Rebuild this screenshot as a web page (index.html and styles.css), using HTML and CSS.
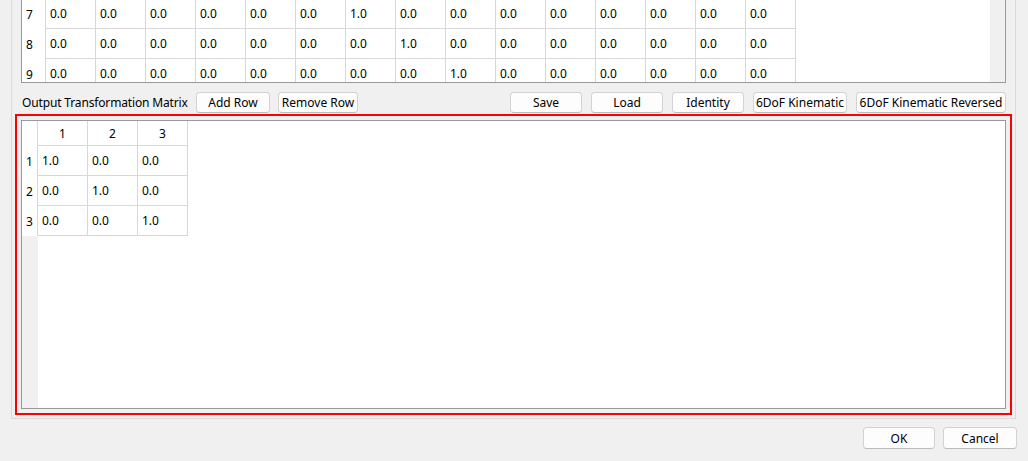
FILE: index.html
```html
<!DOCTYPE html>
<html lang="en">
<head>
    <meta charset="UTF-8">
    <meta name="viewport" content="width=device-width, initial-scale=1.0">
    <title>Transformation Matrix</title>
    <link rel="stylesheet" href="styles.css">
</head>
<body>
    <div class="dialog">
        <div class="group">
            <!-- input matrix, scrolled down to the last rows -->
            <div class="matrix-view">
                <div class="viewport">
                    <div class="grid input-grid">
                        <div class="row-head">7</div>
                        <div class="cell">0.0</div><div class="cell">0.0</div><div class="cell">0.0</div><div class="cell">0.0</div><div class="cell">0.0</div>
                        <div class="cell">0.0</div><div class="cell">1.0</div><div class="cell">0.0</div><div class="cell">0.0</div><div class="cell">0.0</div>
                        <div class="cell">0.0</div><div class="cell">0.0</div><div class="cell">0.0</div><div class="cell">0.0</div><div class="cell">0.0</div>

                        <div class="row-head">8</div>
                        <div class="cell">0.0</div><div class="cell">0.0</div><div class="cell">0.0</div><div class="cell">0.0</div><div class="cell">0.0</div>
                        <div class="cell">0.0</div><div class="cell">0.0</div><div class="cell">1.0</div><div class="cell">0.0</div><div class="cell">0.0</div>
                        <div class="cell">0.0</div><div class="cell">0.0</div><div class="cell">0.0</div><div class="cell">0.0</div><div class="cell">0.0</div>

                        <div class="row-head">9</div>
                        <div class="cell">0.0</div><div class="cell">0.0</div><div class="cell">0.0</div><div class="cell">0.0</div><div class="cell">0.0</div>
                        <div class="cell">0.0</div><div class="cell">0.0</div><div class="cell">0.0</div><div class="cell">1.0</div><div class="cell">0.0</div>
                        <div class="cell">0.0</div><div class="cell">0.0</div><div class="cell">0.0</div><div class="cell">0.0</div><div class="cell">0.0</div>
                    </div>
                </div>
                <div class="scroll-track"></div>
            </div>

            <div class="toolbar">
                <span class="toolbar-label">Output Transformation Matrix</span>
                <button class="btn btn-add">Add Row</button>
                <button class="btn btn-remove">Remove Row</button>
                <span class="spacer"></span>
                <button class="btn">Save</button>
                <button class="btn">Load</button>
                <button class="btn">Identity</button>
                <button class="btn btn-kin">6DoF Kinematic</button>
                <button class="btn btn-kin-rev">6DoF Kinematic Reversed</button>
            </div>

            <div class="highlight">
                <div class="output-view">
                    <div class="grid output-grid">
                        <div class="corner"></div>
                        <div class="col-head">1</div>
                        <div class="col-head">2</div>
                        <div class="col-head">3</div>

                        <div class="row-head">1</div>
                        <div class="cell">1.0</div><div class="cell">0.0</div><div class="cell">0.0</div>
                        <div class="row-head">2</div>
                        <div class="cell">0.0</div><div class="cell">1.0</div><div class="cell">0.0</div>
                        <div class="row-head">3</div>
                        <div class="cell">0.0</div><div class="cell">0.0</div><div class="cell">1.0</div>
                    </div>
                </div>
            </div>
        </div>

        <div class="dialog-buttons">
            <button class="btn">OK</button>
            <button class="btn btn-cancel">Cancel</button>
        </div>
    </div>
</body>
</html>
```

FILE: styles.css
```css
* {
    box-sizing: border-box;
}

body {
    margin: 0;
    height: 461px;
    overflow: hidden;
    background-color: #f0f0f0;
    font-family: 'Noto Sans', 'Segoe UI', sans-serif;
    font-size: 12px;
    color: #000;
}

.dialog {
    padding: 0 11px;
}

.group {
    border: 1px solid #dadada;
    border-top: none;
    margin-right: 1px;
    padding: 0 9px 3px 9px;
}

/* tables */

.grid {
    display: grid;
}

.cell,
.row-head,
.col-head {
    display: flex;
    align-items: center;
    white-space: nowrap;
    background-color: #fff;
}

.cell {
    padding-left: 4px;
    border-right: 1px solid #d8d8d8;
    border-bottom: 1px solid #d8d8d8;
}

.row-head {
    padding-left: 4px;
    border-right: 1px solid #d8d8d8;
}

.col-head {
    justify-content: center;
    border-right: 1px solid #d8d8d8;
    border-bottom: 1px solid #d8d8d8;
}

.corner {
    background-color: #fff;
    border-right: 1px solid #d8d8d8;
}

.matrix-view {
    display: flex;
    height: 83px;
    border: 1px solid #999;
    border-top: none;
    background-color: #fff;
}

.matrix-view .viewport {
    flex: 1;
    overflow: hidden;
}

.matrix-view .scroll-track {
    width: 15px;
    background-color: #f0f0f0;
}

.input-grid {
    grid-template-columns: 24px repeat(15, 50px);
    grid-auto-rows: 30px;
    margin-top: -1px;
}

.highlight {
    margin: 0 -6px;
    border: 2px solid #ff0000;
    padding: 4px;
}

.output-view {
    height: 289px;
    border: 1px solid #999;
    background: linear-gradient(to right, #f0f0f0 16px, #fff 16px);
}

.output-grid {
    grid-template-columns: 16px repeat(3, 50px);
    grid-template-rows: 25px repeat(3, 30px);
}

/* buttons */

.btn {
    height: 21px;
    width: 72px;
    padding: 0;
    border: 1px solid #d3d3d3;
    border-bottom-color: #bcbcbc;
    border-radius: 4px;
    background-color: #fdfdfd;
    font-family: inherit;
    font-size: 12px;
    color: #000;
    white-space: nowrap;
    cursor: pointer;
}

.btn:hover {
    background-color: #f5f5f5;
}

.toolbar {
    display: flex;
    align-items: flex-start;
    gap: 9px;
    height: 22px;
    margin-top: 9px;
}

.toolbar-label {
    width: 166px;
    line-height: 21px;
    padding-left: 1px;
    letter-spacing: -0.15px;
    white-space: nowrap;
}

.toolbar .btn-add {
    width: 74px;
    margin-right: -1px;
}

.toolbar .btn-remove {
    width: 80px;
}

.spacer {
    flex: 1;
}

.toolbar .btn-kin {
    width: 94px;
}

.toolbar .btn-kin-rev {
    width: 150px;
}

.dialog-buttons {
    display: flex;
    justify-content: flex-end;
    gap: 8px;
    margin-top: 8px;
}

.dialog-buttons .btn {
    height: 22px;
}

.dialog-buttons .btn-cancel {
    width: 74px;
}
```
